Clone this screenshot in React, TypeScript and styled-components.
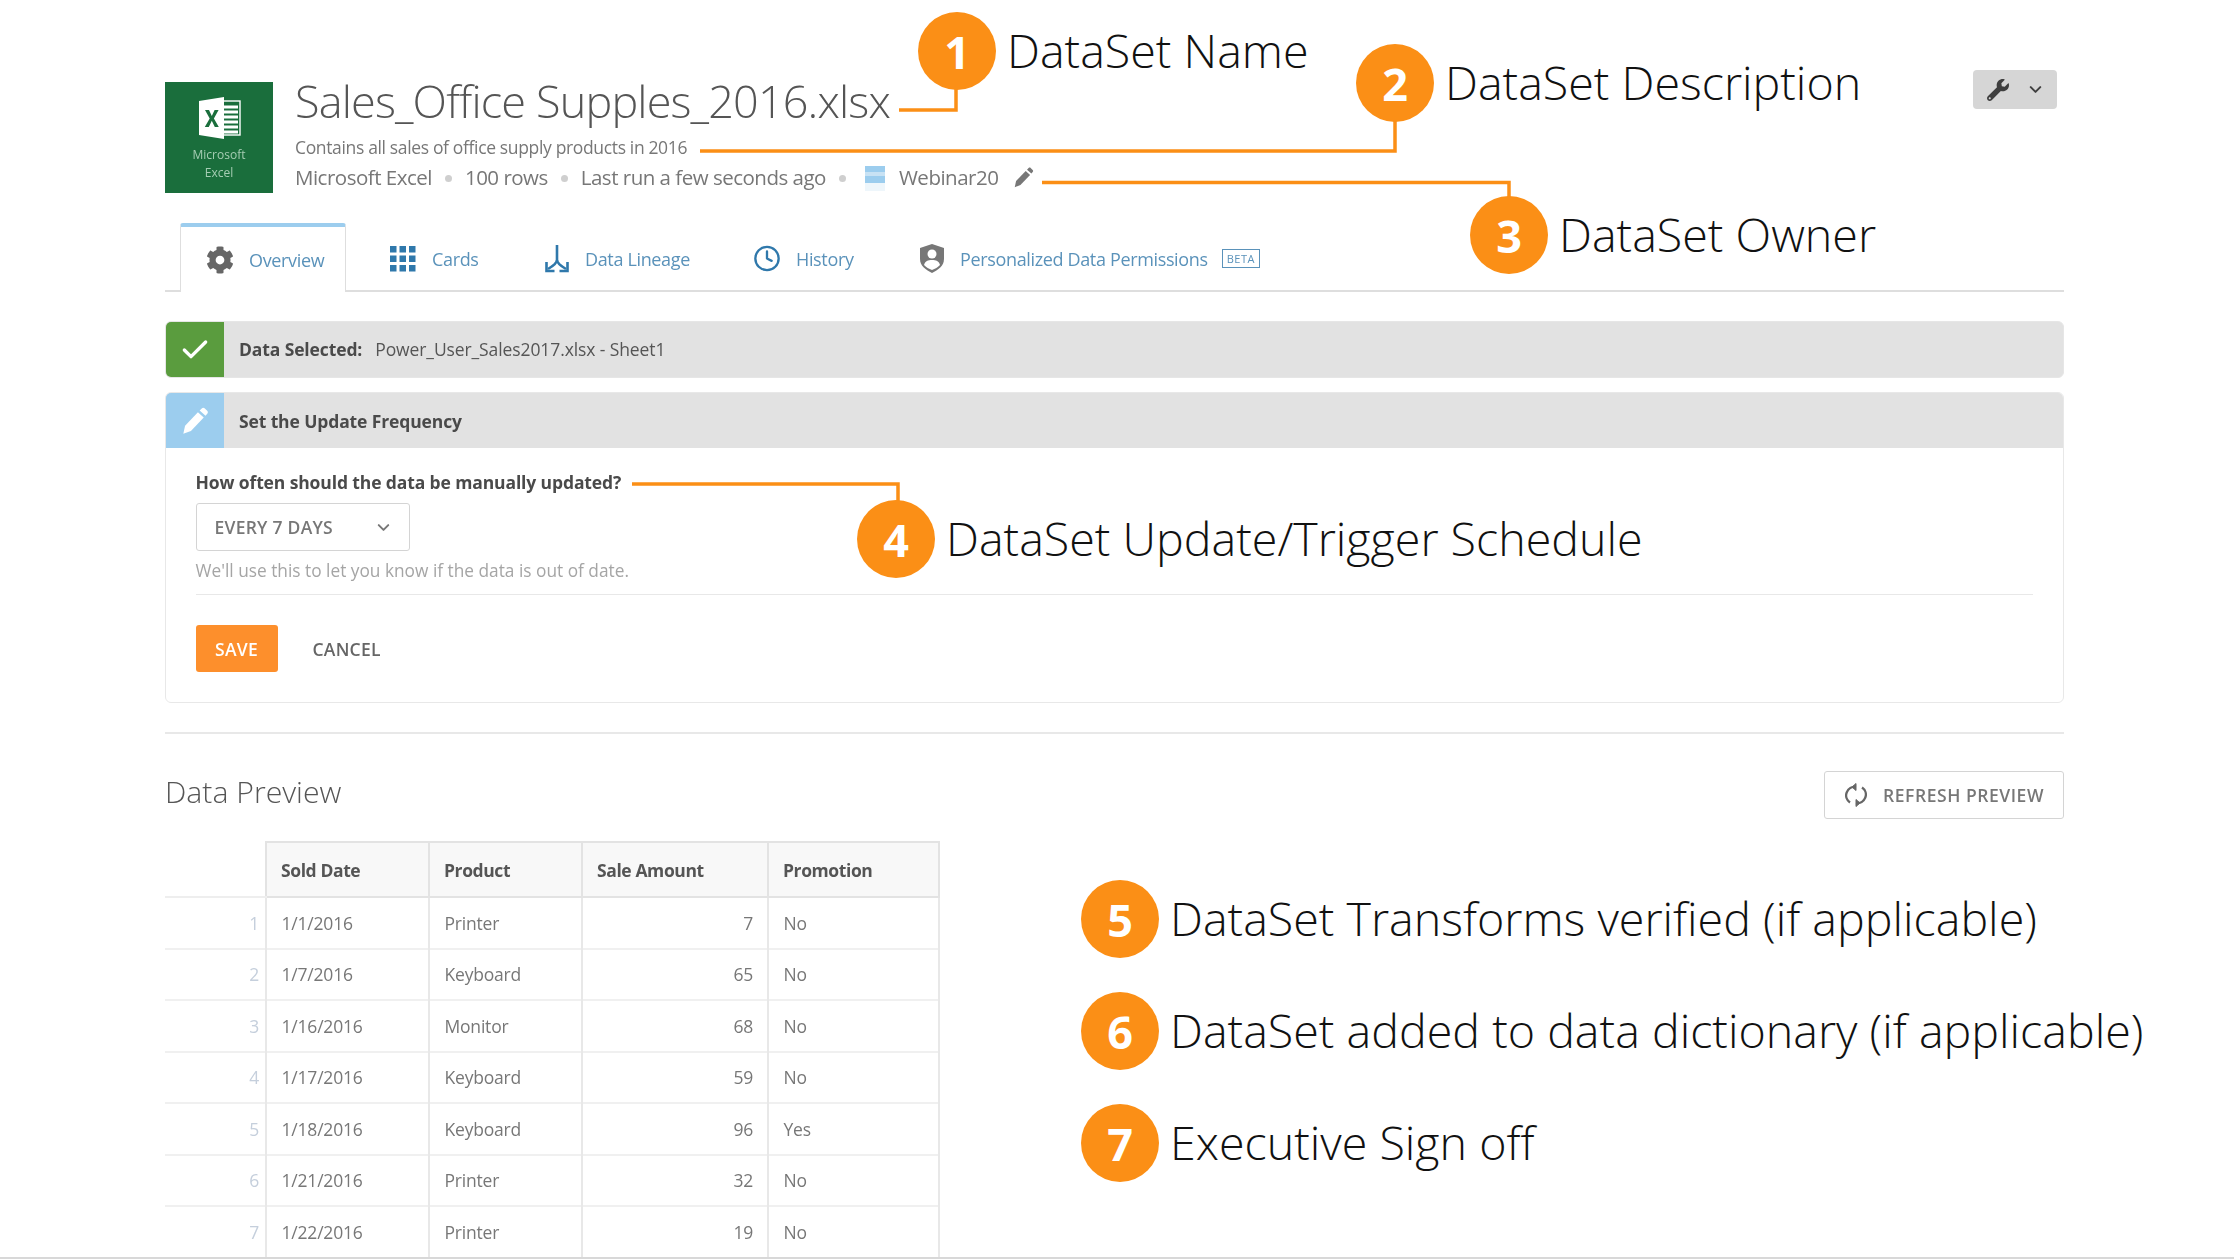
import React from "react";
import styled, { createGlobalStyle } from "styled-components";
import { FaCog, FaWrench } from "react-icons/fa";
import { Check, ChevronDown, Clock } from "lucide-react";

const Global = createGlobalStyle`
  html, body { margin: 0; padding: 0; background: #fff; }
  body { font-family: "Open Sans", "Liberation Sans", sans-serif; color: #4a4a4a; }
  * { box-sizing: border-box; }
`;

const Page = styled.div`
  position: relative;
  width: 2234px;
  height: 1259px;
  overflow: hidden;
  background: #fff;
  border-bottom: 2px solid #d8d8d8;
`;
const Content = styled.div`
  display: flex;
  flex-direction: column;
  padding: 82px 170px 0 165px;
  filter: blur(0.5px);
`;
const Header = styled.header`
  display: flex;
  align-items: flex-start;
  height: 111px;
  gap: 22px;
`;
const Tile = styled.div`
  width: 108px;
  height: 111px;
  flex: none;
  background: #1a6e3c;
  display: flex;
  flex-direction: column;
  align-items: center;
  padding-top: 14px;
  color: #a5cdb3;
  font-size: 12px;
  line-height: 18px;
  svg { margin-bottom: 6px; }
`;
const HeaderText = styled.div`
  display: flex;
  flex-direction: column;
  flex: 1;
`;
const Title = styled.h1`
  margin: 0;
  height: 44px;
  margin-top: -6px;
  font-size: 45px;
  line-height: 50px;
  font-weight: 300;
  letter-spacing: -0.85px;
  color: #555;
  white-space: nowrap;
`;
const Description = styled.div`
  margin-top: 15px;
  font-size: 17.5px;
  line-height: 24px;
  letter-spacing: -0.35px;
  color: #777;
`;
const Meta = styled.div`
  display: flex;
  align-items: center;
  margin-top: 5px;
  height: 26px;
  font-size: 20.5px;
  letter-spacing: -0.5px;
  color: #777;
  white-space: nowrap;
`;
const Dot = styled.span`
  width: 7px;
  height: 7px;
  border-radius: 50%;
  background: #cfcfcf;
  margin: 3px 13px 0;
`;
const Avatar = styled.span`
  width: 20px;
  height: 25px;
  margin: 3px 14px 0 6px;
  background: linear-gradient(#9ccdee 0 26%, #c8e2f4 26% 40%, #9ccdee 40% 70%, #eef6fb 70%);
`;
const EditIcon = styled.span`
  display: flex;
  color: #777;
  margin-left: 15px;
`;
const ToolButton = styled.button`
  flex: none;
  width: 84px;
  height: 39px;
  margin: -12px 7px 0 0;
  border: 0;
  border-radius: 4px;
  background: #d6d6d6;
  color: #3f3f3f;
  display: flex;
  align-items: center;
  justify-content: center;
  gap: 17px;
  padding: 0 0 0 2px;
  svg:first-child { font-size: 22px; }
`;
const Tabs = styled.nav`
  display: flex;
  margin-top: 30px;
  height: 69px;
  padding-left: 15px;
  border-bottom: 2px solid #dedede;
`;
const Tab = styled.a<{ $active?: boolean; $w: number }>`
  width: ${(p) => p.$w}px;
  height: ${(p) => (p.$active ? 69 : 67)}px;
  flex: none;
  display: flex;
  align-items: center;
  gap: 15px;
  padding: ${(p) => (p.$active ? "0 0 0 25px" : "4px 0 0 43px")};
  font-size: 18px;
  letter-spacing: -0.35px;
  color: #5a92ba;
  white-space: nowrap;
  background: #fff;
  ${(p) =>
    p.$active
      ? "border: 1px solid #dedede; border-bottom: 0; border-top: 4px solid #9ccdee; border-radius: 3px 3px 0 0;"
      : ""}
`;
const TabIcon = styled.span<{ $c?: string }>`
  display: flex;
  width: 28px;
  justify-content: center;
  color: ${(p) => p.$c ?? "#2f78ab"};
  font-size: 28px;
`;
const Beta = styled.span`
  margin-left: -1px;
  border: 1.5px solid #5a92ba;
  font-size: 11px;
  line-height: 17px;
  padding: 0 4px;
  letter-spacing: 0.5px;
`;
const Bar = styled.div`
  display: flex;
  align-items: center;
  height: 57px;
  margin-top: 29px;
  padding-bottom: 0;
  background: #e2e2e2;
  border: 1px solid #e6e6e6;
  border-radius: 6px;
  overflow: hidden;
`;
const Panel = styled.section`
  margin-top: 14px;
  height: 311px;
  border: 1.5px solid #e8e8e8;
  border-radius: 6px;
  overflow: hidden;
  display: flex;
  flex-direction: column;
`;
const PanelHead = styled.div`
  display: flex;
  align-items: center;
  flex: none;
  height: 55px;
  background: #e2e2e2;
`;
const BarIcon = styled.div<{ $bg: string }>`
  width: 58px;
  align-self: stretch;
  flex: none;
  background: ${(p) => p.$bg};
  color: #fff;
  display: flex;
  align-items: center;
  justify-content: center;
`;
const BarLabel = styled.span<{ $lift?: boolean }>`
  margin: ${(p) => (p.$lift ? "-2px 0 0 15px" : "0 0 0 15px")};
  font-size: 17.5px;
  font-weight: 700;
  letter-spacing: -0.12px;
  color: #4a4a4a;
`;
const BarValue = styled.span`
  margin: -2px 0 0 13px;
  font-size: 17.5px;
  letter-spacing: -0.1px;
  color: #555;
`;
const PanelBody = styled.div`
  display: flex;
  flex-direction: column;
  align-items: flex-start;
  padding: 22px 30px 0 29.5px;
`;
const Question = styled.label`
  font-size: 17.5px;
  line-height: 24px;
  font-weight: 700;
  letter-spacing: -0.12px;
  color: #4a4a4a;
`;
const Select = styled.div`
  display: flex;
  align-items: center;
  justify-content: space-between;
  margin-top: 9px;
  width: 214px;
  height: 48px;
  border: 1.5px solid #d4d4d4;
  border-radius: 3px;
  padding: 0 16px 0 18px;
  font-size: 17.5px;
  font-weight: 600;
  letter-spacing: 0.25px;
  color: #777;
`;
const Help = styled.div`
  margin-top: 8px;
  font-size: 17.3px;
  line-height: 24px;
  color: #a5a5a5;
`;
const Rule = styled.hr`
  width: 100%;
  margin: 11px 0 0;
  border: 0;
  border-top: 1.5px solid #e8e8e8;
`;
const Actions = styled.div`
  display: flex;
  align-items: center;
  margin-top: 30px;
  gap: 35px;
`;
const SaveButton = styled.button`
  width: 82px;
  height: 47px;
  border: 0;
  border-radius: 3px;
  background: #fd8f2c;
  color: #fff;
  font: 600 17.5px "Open Sans", sans-serif;
  letter-spacing: 0.25px;
`;
const CancelButton = styled.button`
  border: 0;
  background: none;
  padding: 0;
  color: #666;
  font: 600 17.5px "Open Sans", sans-serif;
  letter-spacing: 0.25px;
`;
const Divider = styled.hr`
  width: 100%;
  margin: 29px 0 0;
  border: 0;
  border-top: 2px solid #e8e8e8;
`;
const PreviewHead = styled.div`
  display: flex;
  align-items: flex-start;
  justify-content: space-between;
  margin-top: 37px;
  height: 70px;
`;
const PreviewTitle = styled.h2`
  margin: -1px 0 0;
  font-size: 30.2px;
  line-height: 44px;
  font-weight: 300;
  color: #555;
`;
const RefreshButton = styled.button`
  display: flex;
  align-items: center;
  gap: 16px;
  width: 240px;
  height: 48px;
  padding: 0 0 0 20px;
  background: #fff;
  border: 1.5px solid #d4d4d4;
  border-radius: 3px;
  color: #777;
  font: 600 17.5px "Open Sans", sans-serif;
  letter-spacing: 0.55px;
  white-space: nowrap;
`;
const Table = styled.table`
  width: 774px;
  table-layout: fixed;
  border-collapse: collapse;
  font-size: 17.5px;
  letter-spacing: -0.2px;
`;
const HeadCell = styled.th<{ $w: number }>`
  width: ${(p) => p.$w}px;
  height: 55px;
  padding: 0 14px;
  text-align: left;
  font-weight: 700;
  letter-spacing: -0.4px;
  color: #555;
  background: #f8f8f8;
  border: 2px solid #e3e3e3;
`;
const GutterHead = styled.th`
  width: 101px;
  border-bottom: 2px solid #eee;
`;
const Row = styled.tr`
  height: 51.5px;
  border-bottom: 2px solid #f0f0f0;
`;
const Gutter = styled.td`
  padding: 0 6px 0 0;
  text-align: right;
  color: #c5cfdc;
`;
const Cell = styled.td<{ $right?: boolean }>`
  padding: ${(p) => (p.$right ? "0 14px 0 15px" : "0 15px 0 14.5px")};
  color: #777;
  text-align: ${(p) => (p.$right ? "right" : "left")};
  border-left: 2px solid #e8e8e8;
  border-right: 2px solid #e8e8e8;
`;

const Lines = styled.svg`
  position: absolute;
  inset: 0;
  pointer-events: none;
`;
const Callout = styled.div<{ $x: number; $y: number }>`
  position: absolute;
  left: ${(p) => p.$x}px;
  top: ${(p) => p.$y}px;
  display: flex;
  align-items: center;
  gap: 11px;
  white-space: nowrap;
`;
const Badge = styled.span`
  width: 78px;
  height: 78px;
  border-radius: 50%;
  background: #fb8f16;
  color: #fff;
  font-size: 45px;
  font-weight: 700;
  display: flex;
  align-items: center;
  justify-content: center;
`;
const CalloutText = styled.span`
  font-size: 46.6px;
  font-weight: 300;
  color: #111;
  margin-top: -2px;
`;

const rows = [
  ["1/1/2016", "Printer", "7", "No"],
  ["1/7/2016", "Keyboard", "65", "No"],
  ["1/16/2016", "Monitor", "68", "No"],
  ["1/17/2016", "Keyboard", "59", "No"],
  ["1/18/2016", "Keyboard", "96", "Yes"],
  ["1/21/2016", "Printer", "32", "No"],
  ["1/22/2016", "Printer", "19", "No"],
];

const callouts = [
  { n: 1, x: 918, y: 12, t: "DataSet Name" },
  { n: 2, x: 1356, y: 44, t: "DataSet Description" },
  { n: 3, x: 1470, y: 196, t: "DataSet Owner" },
  { n: 4, x: 857, y: 500, t: "DataSet Update/Trigger Schedule" },
  { n: 5, x: 1081, y: 880, t: "DataSet Transforms verified (if applicable)" },
  { n: 6, x: 1081, y: 992, t: "DataSet added to data dictionary (if applicable)" },
  { n: 7, x: 1081, y: 1104, t: "Executive Sign off" },
];

const ExcelLogo = () => (
  <svg width="44" height="44" viewBox="0 0 44 44">
    <rect x="25" y="5" width="18" height="34" fill="none" stroke="#fff" strokeWidth="1.4" />
    <path d="M27 11h14M27 16h14M27 21h14M27 26h14M27 31h14M27 36h14" stroke="#fff" strokeWidth="3" />
    <path d="M2 5 27 1v42L2 39z" fill="#fff" />
    <path d="M8 14h4l2.8 6 2.8-6h4l-4.7 8.500 4.900 8.500h-4l-3-6.200-3 6.200h-4l4.900-8.500z" fill="#1a6e3c" />
  </svg>
);
const GridIcon = () => (
  <svg width="26" height="26" viewBox="0 0 26 26" fill="currentColor">
    {[0, 9.5, 19].flatMap((y) =>
      [0, 9.5, 19].map((x) => <rect key={`${x}-${y}`} x={x} y={y} width="6.500" height="6.500" />)
    )}
  </svg>
);
const LineageIcon = () => (
  <svg width="27" height="29" viewBox="0 0 27 29" fill="none" stroke="#2f78ab" strokeWidth="2.600">
    <path d="M14 1v15c0 3-4 6-9 9" />
    <path d="M14 16c0 3 4 6 9 9" />
    <path d="M3.500 18v9h8" />
    <path d="M24.500 18v9h-8" />
  </svg>
);
const ShieldIcon = () => (
  <svg width="26" height="29" viewBox="0 0 26 29">
    <path d="M13 0 25 4v11c0 7-6 11-12 14C7 26 1 22 1 15V4z" fill="#777" />
    <circle cx="13" cy="10" r="4.500" fill="#fff" />
    <path d="M5 21c1-4 4-5 8-5s7 1 8 5c-2 2-5 4-8 5-3-1-6-3-8-5z" fill="#fff" />
  </svg>
);
const PencilIcon = ({ size }: { size: number }) => (
  <svg width={size} height={size} viewBox="0 0 24 24" fill="currentColor">
    <path d="M2 23 3.500 16 14.500 4.500 19.500 9 8.500 20.500z" />
    <path d="M16 3 17.800 1.200C18.500.5 19.500.5 20.200 1.100L22.500 3.300C23.200 4 23.200 5 22.500 5.700L21 7.500z" />
  </svg>
);
const RefreshIcon = () => (
  <svg width="22" height="24" viewBox="0 0 22 24" fill="none" stroke="#666" strokeWidth="2.400">
    <path d="M5 19.500A8.500 8.500 0 0 1 11 4" />
    <path d="M17 4.500A8.500 8.500 0 0 1 11 20" />
    <path d="M11 .5 7 4l4 3.500z" fill="#666" strokeWidth="1" />
    <path d="M11 16.500 15 20l-4 3.500z" fill="#666" strokeWidth="1" />
  </svg>
);

export default function App() {
  return (
    <Page>
      <Global />
      <Content>
        <Header>
          <Tile>
            <ExcelLogo />
            <span>Microsoft</span>
            <span>Excel</span>
          </Tile>
          <HeaderText>
            <Title>Sales_Office Supples_2016.xlsx</Title>
            <Description>Contains all sales of office supply products in 2016</Description>
            <Meta>
              <span>Microsoft Excel</span>
              <Dot />
              <span>100 rows</span>
              <Dot />
              <span>Last run a few seconds ago</span>
              <Dot />
              <Avatar />
              <span>Webinar20</span>
              <EditIcon><PencilIcon size={21} /></EditIcon>
            </Meta>
          </HeaderText>
          <ToolButton>
            <FaWrench />
            <ChevronDown size={19} strokeWidth={2.5} />
          </ToolButton>
        </Header>
        <Tabs>
          <Tab $active $w={166}>
            <TabIcon $c="#666"><FaCog /></TabIcon>
            Overview
          </Tab>
          <Tab $w={153}>
            <TabIcon><GridIcon /></TabIcon>
            Cards
          </Tab>
          <Tab $w={211}>
            <TabIcon><LineageIcon /></TabIcon>
            Data Lineage
          </Tab>
          <Tab $w={166}>
            <TabIcon><Clock size={29} strokeWidth={2} /></TabIcon>
            History
          </Tab>
          <Tab $w={380}>
            <TabIcon $c="#777"><ShieldIcon /></TabIcon>
            Personalized Data Permissions
            <Beta>BETA</Beta>
          </Tab>
        </Tabs>
        <Bar>
          <BarIcon $bg="#5a9c3e"><Check size={32} strokeWidth={2.5} /></BarIcon>
          <BarLabel $lift>Data Selected:</BarLabel>
          <BarValue>Power_User_Sales2017.xlsx - Sheet1</BarValue>
        </Bar>
        <Panel>
          <PanelHead>
            <BarIcon $bg="#9ccdee"><PencilIcon size={28} /></BarIcon>
            <BarLabel>Set the Update Frequency</BarLabel>
          </PanelHead>
          <PanelBody>
            <Question>How often should the data be manually updated?</Question>
            <Select>
              EVERY 7 DAYS
              <ChevronDown size={19} strokeWidth={2.5} />
            </Select>
            <Help>We'll use this to let you know if the data is out of date.</Help>
            <Rule />
            <Actions>
              <SaveButton>SAVE</SaveButton>
              <CancelButton>CANCEL</CancelButton>
            </Actions>
          </PanelBody>
        </Panel>
        <Divider />
        <PreviewHead>
          <PreviewTitle>Data Preview</PreviewTitle>
          <RefreshButton>
            <RefreshIcon />
            REFRESH PREVIEW
          </RefreshButton>
        </PreviewHead>
        <Table>
          <thead>
            <tr>
              <GutterHead />
              <HeadCell $w={163}>Sold Date</HeadCell>
              <HeadCell $w={153}>Product</HeadCell>
              <HeadCell $w={186}>Sale Amount</HeadCell>
              <HeadCell $w={171}>Promotion</HeadCell>
            </tr>
          </thead>
          <tbody>
            {rows.map((r, i) => (
              <Row key={i}>
                <Gutter>{i + 1}</Gutter>
                <Cell>{r[0]}</Cell>
                <Cell>{r[1]}</Cell>
                <Cell $right>{r[2]}</Cell>
                <Cell>{r[3]}</Cell>
              </Row>
            ))}
          </tbody>
        </Table>
      </Content>
      <Lines width="2234" height="1259" fill="none" stroke="#fb8f16" strokeWidth="3.500">
        <path d="M899 110H956V80" />
        <path d="M700 151H1395V110" />
        <path d="M1042 182.500H1509V205" />
        <path d="M632 484H898V510" />
      </Lines>
      {callouts.map((c) => (
        <Callout key={c.n} $x={c.x} $y={c.y}>
          <Badge>{c.n}</Badge>
          <CalloutText>{c.t}</CalloutText>
        </Callout>
      ))}
    </Page>
  );
}
